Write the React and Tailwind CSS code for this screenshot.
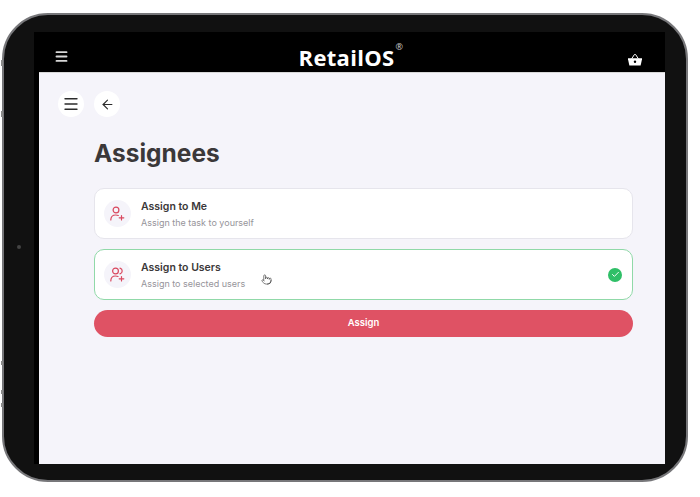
import React from 'react';
import { ArrowLeft, Check, Menu, Pointer } from 'lucide-react';

const sans = { fontFamily: '"Inter", "Open Sans", sans-serif' };

const PersonPlus = () => (
  <svg width="15" height="15" viewBox="0 0 15 15" fill="none" stroke="#d9485f" strokeWidth="1.2" strokeLinecap="round">
    <circle cx="6" cy="4" r="2.9" />
    <path d="M0.8 14c0-3.2 2-5 5-5 1 0 1.8.2 2.5.5" />
    <path d="M11.5 9.5v4.5M9.2 11.8h4.6" />
  </svg>
);

const PeoplePlus = () => (
  <svg width="15" height="15" viewBox="0 0 15 15" fill="none" stroke="#d9485f" strokeWidth="1.2" strokeLinecap="round">
    <circle cx="5.5" cy="4" r="2.9" />
    <path d="M10 1.2c1.4.4 2.2 1.5 2.2 2.8S11.400 6.400 10 6.800" />
    <path d="M0.800 14c0-3.200 2-5 4.700-5 1 0 1.800.2 2.500.5" />
    <path d="M11.500 9.500v4.500M9.200 11.800h4.600" />
  </svg>
);

const Basket = () => (
  <svg width="14" height="12" viewBox="0 0 14 12" fill="white">
    <path d="M0 4.300h14v1l-1.400 6.200H1.400L0 5.300z" />
    <path d="M3.600 4.800 6.500.4h1l2.900 4.400" fill="none" stroke="white" strokeWidth="1" />
    <circle cx="7" cy="7.800" r="1.200" fill="black" />
  </svg>
);

const OptionCard = ({ icon, title, subtitle, selected }) => (
  <div className={`flex items-center h-[51px] rounded-[10px] bg-white pl-[9px] pr-[10px] border ${selected ? 'border-[#90d9a8]' : 'border-[#e6e5ec]'}`}>
    <div className="w-[27px] h-[27px] rounded-full bg-[#f5f4fa] flex items-center justify-center">
      {icon}
    </div>
    <div className="ml-[10px] flex-1 pt-[1px]">
      <div className="text-[10.500px] leading-[14px] font-semibold text-[#3b3839]">{title}</div>
      <div className="text-[9px] leading-[12px] mt-[3px] text-[#96949a]">{subtitle}</div>
    </div>
    {selected && (
      <div className="w-[14px] h-[14px] rounded-full bg-[#2fbf67] flex items-center justify-center">
        <Check className="w-[9px] h-[9px] text-white" strokeWidth={2.500} />
      </div>
    )}
  </div>
);

export default function App() {
  return (
    <div className="w-[700px] h-[497px] bg-white pt-[13px] pl-[2px] overflow-hidden" style={sans}>
      {/* Tablet frame */}
      <div className="relative w-[686px] h-[469px] rounded-[46px] bg-[#111111] border-2 border-[#77777a] pt-[17px] pl-[30px]">
        <div className="absolute left-[-3px] top-[45px] w-[2px] h-[6px] bg-[#8a8a8a]" />
        <div className="absolute left-[-3px] top-[96px] w-[2px] h-[6px] bg-[#8a8a8a]" />
        <div className="absolute left-[-3px] top-[346px] w-[2px] h-[4px] bg-[#8a8a8a]" />
        <div className="absolute left-[-3px] top-[375px] w-[2px] h-[4px] bg-[#8a8a8a]" />
        <div className="absolute left-[-3px] top-[388px] w-[2px] h-[4px] bg-[#8a8a8a]" />
        <div className="absolute left-[13px] top-[230px] w-[4px] h-[4px] rounded-full bg-[#444444]" />

        {/* Screen */}
        <div className="w-[631px] h-[432px] bg-black flex flex-col">
          <div className="h-[40px] flex items-center justify-between shrink-0 pl-[20px] pr-[23px]">
            <Menu className="w-[15px] h-[15px] text-[#d8d8d8] mt-[9px]" strokeWidth={3} />
            <div className="text-white text-[22px] leading-[22px] font-bold tracking-[0.300px] mt-[10px] mr-[4px] relative" style={{ fontFamily: '"Open Sans", sans-serif' }}>
              RetailOS
              <span className="absolute right-[-9px] top-[-4px] text-[9px] leading-[9px] font-normal text-[#cccccc]">®</span>
            </div>
            <div className="mt-[15px]"><Basket /></div>
          </div>

          {/* Page */}
          <div className="flex-1 ml-[5px] bg-[#f5f4fa] border-t border-[#d8d8d8] pt-[18px]">
            <div className="flex gap-[10px] pl-[19px]">
              <div className="w-[26px] h-[26px] rounded-full bg-white flex items-center justify-center">
                <Menu className="w-[18px] h-[18px] text-[#2b2b2b]" strokeWidth={1.800} />
              </div>
              <div className="w-[26px] h-[26px] rounded-full bg-white flex items-center justify-center">
                <ArrowLeft className="w-[15px] h-[15px] text-[#2b2b2b]" strokeWidth={1.800} />
              </div>
            </div>

            <div className="relative pl-[55px] pr-[32px] mt-[21px]">
              <h1 className="text-[24.500px] leading-[30px] font-bold text-[#3b3839]">Assignees</h1>
              <div className="mt-[20px] flex flex-col gap-[10px]">
                <OptionCard icon={<PersonPlus />} title="Assign to Me" subtitle="Assign the task to yourself" />
                <OptionCard icon={<PeoplePlus />} title="Assign to Users" subtitle="Assign to selected users" selected />
              </div>
              <button className="mt-[10px] w-full h-[27px] rounded-full bg-[#df5264] text-white text-[9.500px] font-semibold">
                Assign
              </button>
              <Pointer className="absolute left-[222px] top-[135px] w-[11px] h-[13px] text-[#444444]" strokeWidth={1.500} />
            </div>
          </div>
        </div>
      </div>
    </div>
  );
}
